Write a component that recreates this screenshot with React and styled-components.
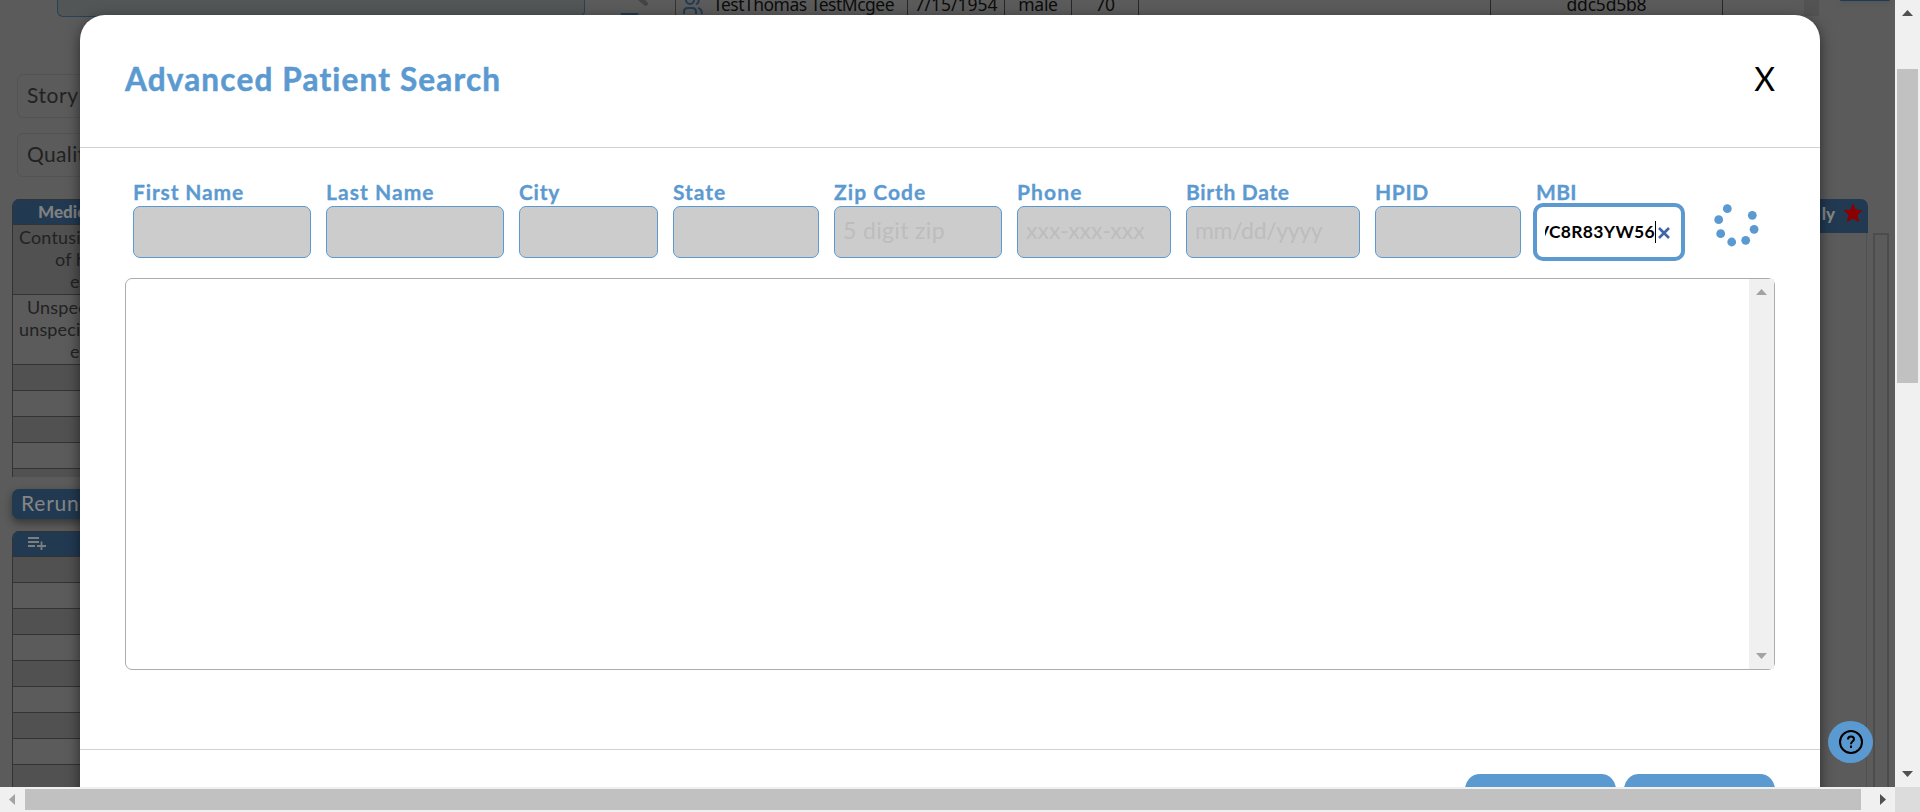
import React from 'react';
import styled, { createGlobalStyle } from 'styled-components';

const BLUE = '#5b9ad1';
const FONT = "'Lato', 'Liberation Sans', sans-serif";

const Global = createGlobalStyle`
  * { box-sizing: border-box; }
  html, body { margin: 0; padding: 0; overflow: hidden; }
  body { font-family: ${FONT}; background: #5b5b5b; }
`;

const Window = styled.div`
  display: grid;
  grid-template: 787px 25px / 1895px 25px;
  width: 1920px;
  height: 812px;
  overflow: hidden;
`;

const Viewport = styled.div`
  position: relative;
  overflow: hidden;
  background: #5b5b5b;
`;

const Backdrop = styled.div`
  height: 787px;
  overflow: hidden;
  color: #222;
`;

const TopStrip = styled.div`
  display: flex;
  height: 17px;
  margin-left: 57px;
`;

const Panel = styled.div`
  flex: none;
  width: 528px;
  height: 17px;
  border: 1px solid #27415a;
  border-top: 0;
  border-radius: 0 0 6px 6px;
  background: #525656;
`;

const EditMark = styled.svg`
  flex: none;
  margin: 0 27px 0 35px;
  width: 28px;
  height: 17px;
`;

const Results = styled.div`
  display: flex;
  flex: none;
  width: 1144px;
  height: 17px;
  border-left: 1px solid #333;
  font: 17.5px 'Noto Sans', sans-serif;
  line-height: 9px;
  color: #0c0c0c;
`;

const Cell = styled.div`
  flex: none;
  width: ${(p) => p.$w}px;
  height: 17px;
  border-right: 1px solid #272727;
  text-align: center;
  white-space: nowrap;
  letter-spacing: ${(p) => p.$ls || 0}px;
`;

const PeopleIcon = styled.svg`
  width: 20px;
  height: 16px;
  margin: 0 10px 0 -6px;
  vertical-align: top;
`;

const ScrollEdge = styled.div`
  width: 15px;
  height: 16px;
  margin-left: auto;
  background: #535353;
`;

const ButtonEdge = styled.div`
  flex: none;
  width: 50px;
  height: 1px;
  margin-left: 21px;
  border-radius: 0 0 8px 8px;
  background: #213a52;
  box-shadow: 0 1px 4px rgba(33, 58, 82, 0.6);
`;

const Columns = styled.div`
  display: flex;
  justify-content: space-between;
`;

const LeftColumn = styled.div`
  width: 240px;
  padding-top: 57px;
`;

const Tab = styled.div`
  height: 44px;
  margin: 0 0 15px 17px;
  padding-left: 9px;
  border: 1px solid #535353;
  border-radius: 6px;
  font-size: 21px;
  line-height: 40px;
  letter-spacing: ${(p) => p.$ls}px;
`;

const Grid = styled.div`
  width: 260px;
  margin: ${(p) => p.$m};
  height: ${(p) => p.$h}px;
  overflow: hidden;
  border: 1px solid #333;
  border-width: 0 0 0 1px;
  border-radius: 7px 0 0 0;
`;

const GridHead = styled.div`
  height: 26px;
  border: 1px solid #333;
  border-width: 1px 0;
  background: #213a52;
  color: #808080;
  font-weight: 900;
  font-size: 17px;
  line-height: 24px;
  padding-left: ${(p) => p.$pad}px;
`;

const GridRow = styled.div`
  height: ${(p) => p.$h || 26}px;
  border-bottom: 1px solid #333;
  background: ${(p) => (p.$odd ? '#515151' : '#5b5b5b')};
  padding-top: 1px;
`;

const Line = styled.div`
  height: 22px;
  padding-left: ${(p) => p.$x}px;
  font-size: 18px;
  line-height: 22px;
  white-space: nowrap;
  letter-spacing: 0.15px;
`;

const Rerun = styled.div`
  width: 240px;
  height: 30px;
  margin: 12px 0 12px 12px;
  padding-left: 9px;
  border-radius: 7px;
  background: #213a52;
  box-shadow: 0 4px 8px rgba(0, 0, 0, 0.4);
  color: #868686;
  font-size: 21px;
  line-height: 28px;
  letter-spacing: 0.8px;
`;

const RightColumn = styled.div`
  width: 80px;
  padding-top: 182px;
`;

const RightHead = styled.div`
  display: flex;
  align-items: center;
  justify-content: flex-end;
  gap: 8px;
  width: 53px;
  height: 34px;
  padding: 0 5px 6px 0;
  border-radius: 0 7px 0 0;
  background: #213a52;
  color: #868686;
  font-size: 17px;
  font-weight: 900;
`;

const RightBody = styled.div`
  display: flex;
  gap: 6px;
  width: 74px;
  height: 560px;
`;

const Lane = styled.div`
  width: ${(p) => p.$w}px;
  border-right: 1px solid #505050;
`;

const Track = styled.div`
  width: 16px;
  border: 2px solid #4c4c4c;
  border-bottom: 0;
`;

const Dialog = styled.section`
  position: absolute;
  left: 80px;
  top: 15px;
  width: 1740px;
  height: 860px;
  border-radius: 25px;
  background: #fff;
  box-shadow: 0 4px 14px rgba(0, 0, 0, 0.55);
`;

const Header = styled.header`
  display: flex;
  align-items: flex-start;
  justify-content: space-between;
  height: 133px;
  padding: 40px 45px 0;
  border-bottom: 1px solid #d2d2d2;
`;

const Title = styled.h1`
  margin: 0;
  color: ${BLUE};
  font-size: 31.5px;
  font-weight: 700;
  line-height: 48px;
  letter-spacing: 1.18px;
  -webkit-text-stroke: 0.5px ${BLUE};
`;

const Close = styled.button`
  padding: 0;
  border: 0;
  background: none;
  font: 32px/48px ${FONT};
  color: #000;
`;

const Form = styled.div`
  display: flex;
  gap: 15px;
  height: 130px;
  padding: 34px 0 0 53px;
`;

const Field = styled.label`
  display: block;
  width: ${(p) => p.$w}px;
`;

const Label = styled.span`
  display: block;
  height: 24px;
  color: ${BLUE};
  font-size: 21px;
  font-weight: 700;
  line-height: 20px;
  white-space: nowrap;
  letter-spacing: ${(p) => p.$ls}px;
  -webkit-text-stroke: 0.3px ${BLUE};
`;

const Box = styled.div`
  height: 52px;
  padding: 0 26px 0 8px;
  border: 1px solid ${BLUE};
  border-radius: 7px;
  background: #ccc;
  color: #bdbdbd;
  font-size: 23px;
  line-height: 46px;
  white-space: nowrap;
  overflow: hidden;
`;

const Clip = styled.div`
  overflow: hidden;
  letter-spacing: ${(p) => p.$ls || 0}px;
`;

const ActiveBox = styled.div`
  display: flex;
  align-items: center;
  width: 152px;
  height: 58px;
  margin: -3px 0 0 -3px;
  padding: 0 11px 0 8px;
  border: 4px solid ${BLUE};
  border-radius: 10px;
  background: #fff;
`;

const Value = styled.div`
  display: flex;
  flex: none;
  justify-content: flex-end;
  width: 111px;
  height: 22px;
  overflow: hidden;
  border-right: 1px solid #000;
  color: #000;
  font-size: 17.5px;
  font-weight: 700;
  line-height: 22px;
  letter-spacing: 0.3px;
`;

const Clear = styled.svg`
  flex: none;
  width: 14px;
  height: 14px;
  margin: 2px 0 0 1px;
`;

const Spinner = styled.svg`
  width: 50px;
  height: 46px;
  margin: 20px 0 0 13px;
`;

const List = styled.div`
  display: flex;
  justify-content: flex-end;
  width: 1650px;
  height: 392px;
  margin: 0 45px 79px;
  border: 1px solid #acacac;
  border-radius: 7px;
`;

const ListBar = styled.div`
  display: flex;
  flex-direction: column;
  justify-content: space-between;
  align-items: center;
  width: 25px;
  padding: 10px 0;
  background: #f0f0f0;
`;

const Footer = styled.footer`
  display: flex;
  justify-content: flex-end;
  gap: 8px;
  padding: 24px 45px 0;
  border-top: 1px solid #d2d2d2;
`;

const Action = styled.button`
  width: 151px;
  height: 50px;
  border: 0;
  border-radius: 15px;
  background: ${BLUE};
`;

const Help = styled.button`
  position: absolute;
  left: 1828px;
  top: 721px;
  display: grid;
  place-items: center;
  width: 45px;
  height: 42px;
  padding: 0;
  border: 0;
  border-radius: 50%;
  background: ${BLUE};
`;

const VBar = styled.div`
  display: flex;
  flex-direction: column;
  align-items: center;
  justify-content: space-between;
  padding: 10px 0;
  background: #f0f0f0;
`;

const VThumb = styled.div`
  width: 21px;
  height: 314px;
  margin: 53px 0 auto;
  background: #c1c1c1;
`;

const HBar = styled.div`
  display: flex;
  align-items: center;
  justify-content: space-between;
  padding: 0 9px;
  background: #f0f0f0;
`;

const HThumb = styled.div`
  width: 1836px;
  height: 21px;
  margin: 0 auto 0 10px;
  background: #c1c1c1;
`;

const Corner = styled.div`
  background: #dcdcdc;
`;

const Vertical = ({ up, color }) => (
  <svg width="11" height="6" viewBox="0 0 11 6">
    <path d={up ? 'M0 6L5.5 0L11 6z' : 'M0 0L5.5 6L11 0z'} fill={color} />
  </svg>
);

const Horizontal = ({ left, color }) => (
  <svg width="6" height="11" viewBox="0 0 6 11">
    <path d={left ? 'M6 0L0 5.5L6 11z' : 'M0 0L6 5.5L0 11z'} fill={color} />
  </svg>
);

const fields = [
  { name: 'First Name', w: 178, ls: 0.85 },
  { name: 'Last Name', w: 178, ls: 1.05 },
  { name: 'City', w: 139, ls: 0.7 },
  { name: 'State', w: 146, ls: 0.95 },
  { name: 'Zip Code', w: 168, ls: 1.05, hint: '5 digit zip', hintLs: 0.35 },
  { name: 'Phone', w: 154, ls: 1.15, hint: 'xxx-xxx-xxxx', hintLs: 0 },
  { name: 'Birth Date', w: 174, ls: 0.7, hint: 'mm/dd/yyyy', hintLs: -0.35 },
  { name: 'HPID', w: 146, ls: 0.6 },
];

const dots = [[17.3, 6.7], [42.3, 13.3], [8.7, 17.7], [44.1, 27.3], [10.7, 31.7], [35.7, 38.3], [21.7, 40]];

export default function App() {
  return (
    <Window>
      <Global />
      <Viewport>
        <Backdrop>
          <TopStrip>
            <Panel />
            <EditMark viewBox="0 0 28 17">
              <path d="M0 13h19l-3 4H3z" fill="#213a52" />
              <path d="M18 0h7l3 3q0 3-3 3z" fill="#444" />
            </EditMark>
            <Results>
              <Cell $w={232} $ls={-0.5}>
                <PeopleIcon viewBox="0 0 20 16" fill="none" stroke="#213a52" strokeWidth="2">
                  <circle cx="7" cy="0" r="4" />
                  <path d="M1 14v-2q0-4 4-4h4q4 0 4 4v2M13 4q4-1 2-5M15 8q4 1 4 6" />
                </PeopleIcon>
                TestThomas TestMcgee
              </Cell>
              <Cell $w={97}>7/15/1954</Cell>
              <Cell $w={67} $ls={-0.3}>male</Cell>
              <Cell $w={67} $ls={-0.3}>70</Cell>
              <Cell $w={352} />
              <Cell $w={232} $ls={-0.2}>ddc5d5b8</Cell>
              <ScrollEdge />
            </Results>
            <ButtonEdge />
          </TopStrip>
          <Columns>
            <LeftColumn>
              <Tab $ls={0.6}>Story</Tab>
              <Tab $ls={0.35}>Quality</Tab>
              <Grid $m="22px 0 0 12px" $h={278}>
                <GridHead $pad={25}>Medical</GridHead>
                <GridRow $odd $h={70}>
                  <Line $x={6}>Contusion</Line>
                  <Line $x={42}>of head</Line>
                  <Line $x={57}>enc</Line>
                </GridRow>
                <GridRow $h={70}>
                  <Line $x={14}>Unspecified</Line>
                  <Line $x={6}>unspecified</Line>
                  <Line $x={57}>enc</Line>
                </GridRow>
                {[1, 0, 1, 0, 1].map((odd, i) => <GridRow key={i} $odd={odd} />)}
              </Grid>
              <Rerun>Rerun</Rerun>
              <Grid $m="0 0 0 12px" $h={260}>
                <GridHead $pad={15}>
                  <svg width="18" height="13" viewBox="0 0 18 13" fill="none" stroke="#7c7f82" strokeWidth="1.800">
                    <path d="M0 1h11M0 5h11M0 9h7M9 9h9M13.500 4.500v9" />
                  </svg>
                </GridHead>
                {[1, 0, 1, 0, 1, 0, 1, 0, 1].map((odd, i) => <GridRow key={i} $odd={odd} />)}
              </Grid>
            </LeftColumn>
            <RightColumn>
              <RightHead>
                ly
                <svg width="20" height="20" viewBox="0 0 20 20">
                  <path d="M10 1.500l2.400 5.600 6.300.5-4.700 4.300 1.400 6.300L10 15l-5.400 3.200L6 11.900 1.300 7.600l6.300-.5z" fill="#8b0000" stroke="#8b0000" strokeLinejoin="round" />
                </svg>
              </RightHead>
              <RightBody>
                <Lane $w={52} />
                <Track />
              </RightBody>
            </RightColumn>
          </Columns>
        </Backdrop>
        <Dialog>
          <Header>
            <Title>Advanced Patient Search</Title>
            <Close>X</Close>
          </Header>
          <Form>
            {fields.map((f) => (
              <Field key={f.name} $w={f.w}>
                <Label $ls={f.ls}>{f.name}</Label>
                <Box><Clip $ls={f.hintLs}>{f.hint}</Clip></Box>
              </Field>
            ))}
            <Field $w={146}>
              <Label $ls={0.3}>MBI</Label>
              <ActiveBox>
                <Value>VC8R83YW56</Value>
                <Clear viewBox="0 0 14 14">
                  <path d="M2 2l10 10M12 2l-10 10" stroke="#3d65a8" strokeWidth="2.600" />
                </Clear>
              </ActiveBox>
            </Field>
            <Spinner viewBox="0 0 50 46">
              {dots.map(([x, y]) => <circle key={x} cx={x} cy={y} r="4.400" fill={BLUE} />)}
            </Spinner>
          </Form>
          <List>
            <ListBar>
              <Vertical up color="#a3a3a3" />
              <Vertical color="#a3a3a3" />
            </ListBar>
          </List>
          <Footer>
            <Action />
            <Action />
          </Footer>
        </Dialog>
        <Help>
          <svg width="24" height="24" viewBox="0 0 24 24" fill="none" stroke="#000" strokeWidth="2">
            <circle cx="12" cy="12" r="11" />
            <path d="M9 9.500q0-3 3-3t3 2.700c0 2-3 2.300-3 5" />
            <path d="M12 15.500v2.500" />
          </svg>
        </Help>
      </Viewport>
      <VBar>
        <Vertical up color="#505050" />
        <VThumb />
        <Vertical color="#505050" />
      </VBar>
      <HBar>
        <Horizontal left color="#a3a3a3" />
        <HThumb />
        <Horizontal color="#505050" />
      </HBar>
      <Corner />
    </Window>
  );
}
